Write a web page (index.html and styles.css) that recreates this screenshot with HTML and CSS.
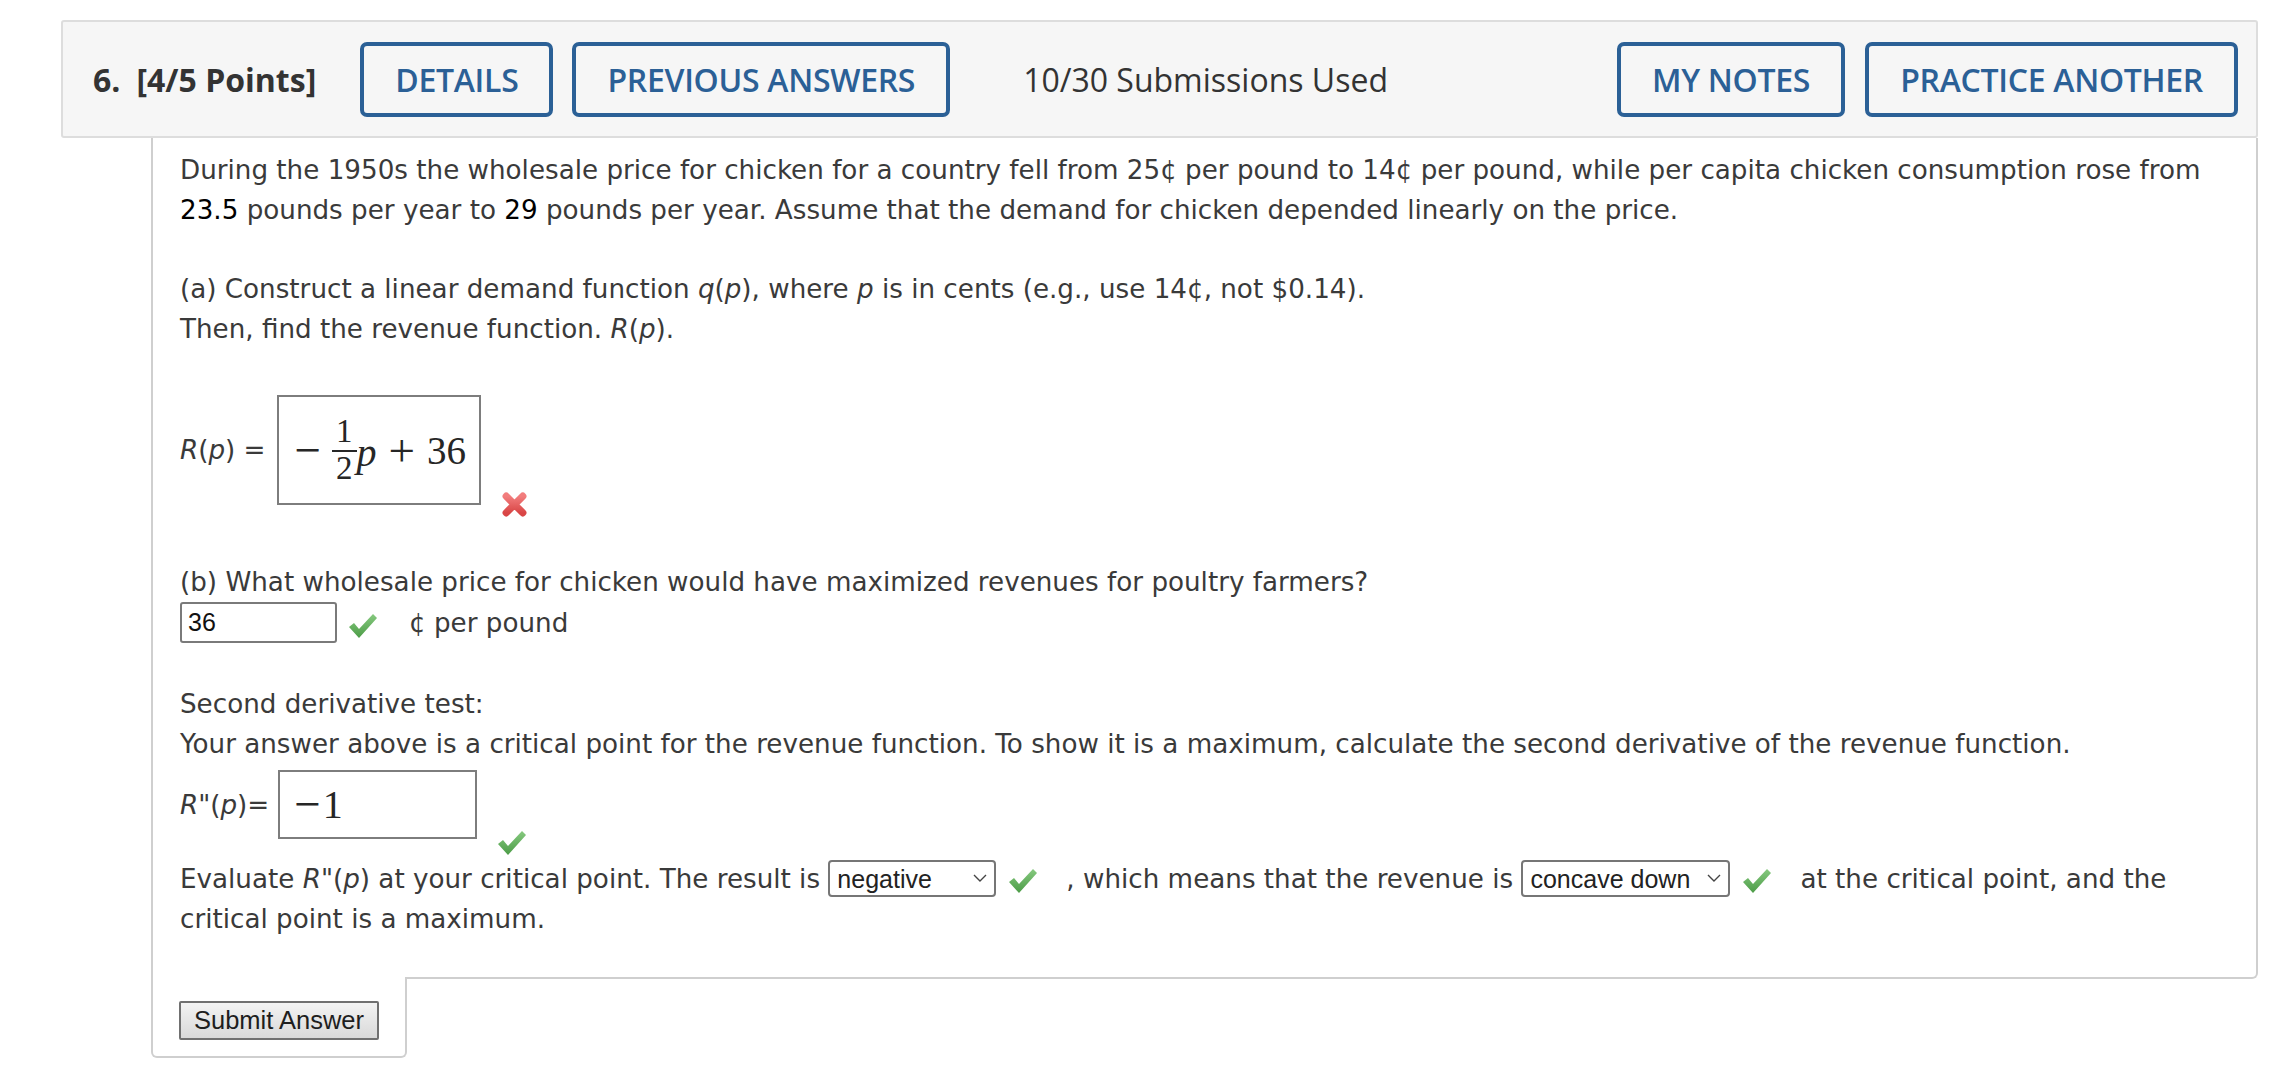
FILE: index.html
```html
<!DOCTYPE html>
<html lang="en">
<head>
<meta charset="utf-8">
<title>Question 6</title>
<link rel="stylesheet" href="styles.css">
</head>
<body>
<div class="question">
  <div class="q-header">
    <span class="q-title"><span class="q-num">6.</span>[4/5 Points]</span>
    <button class="hbtn hbtn-details">DETAILS</button>
    <button class="hbtn">PREVIOUS ANSWERS</button>
    <span class="q-subs">10/30 Submissions Used</span>
    <div class="q-right">
      <button class="hbtn">MY NOTES</button>
      <button class="hbtn">PRACTICE ANOTHER</button>
    </div>
  </div>
  <div class="q-body">
    <p class="para intro">During the 1950s the wholesale price for chicken for a country fell from 25¢ per pound to 14¢ per pound, while per capita chicken consumption rose from <span class="num">23.5</span> pounds per year to <span class="num">29</span> pounds per year. Assume that the demand for chicken depended linearly on the price.</p>
    <p class="para part-a">(a) Construct a linear demand function <i>q</i>(<i>p</i>), where <i>p</i> is in cents (e.g., use 14¢, not $0.14).<br>Then, find the revenue function. <i>R</i>(<i>p</i>).</p>
    <div class="ans-row row-rp">
      <span class="ans-label"><i>R</i>(<i>p</i>) =</span>
      <span class="mathbox mathbox-rp">
        <span class="mop">−</span>
        <span class="frac"><span class="fnum">1</span><span class="fden">2</span></span>
        <span class="mvar">p</span>
        <span class="mop mplus">+</span>
        <span class="mnum">36</span>
      </span>
      <svg class="icon icon-x" viewBox="0 0 28 26" width="29" height="27" aria-label="incorrect">
        <defs>
          <linearGradient id="xg" x1="0" y1="0" x2="0" y2="1">
            <stop offset="0" stop-color="#f27d7d"/>
            <stop offset="1" stop-color="#d94646"/>
          </linearGradient>
        </defs>
        <path d="M6 5 L22 21 M22 5 L6 21" stroke="url(#xg)" stroke-width="7" stroke-linecap="round" fill="none"/>
      </svg>
    </div>
    <p class="para part-b">(b) What wholesale price for chicken would have maximized revenues for poultry farmers?</p>
    <div class="ans-row row-b">
      <input class="txt-input" type="text" value="36" readonly>
      <svg class="icon icon-check check-b" viewBox="0 0 30 26" width="30" height="26" aria-label="correct">
        <defs>
          <linearGradient id="cg1" x1="0" y1="0" x2="0" y2="1">
            <stop offset="0" stop-color="#86c97f"/>
            <stop offset="1" stop-color="#4c9c47"/>
          </linearGradient>
        </defs>
        <path d="M1 14 L6 10 L11 16 L25 1 L29 5 L11 25 Z" fill="url(#cg1)"/>
      </svg>
      <span class="unit">¢ per pound</span>
    </div>
    <p class="para second">Second derivative test:<br>Your answer above is a critical point for the revenue function. To show it is a maximum, calculate the second derivative of the revenue function.</p>
    <div class="ans-row row-rpp">
      <span class="ans-label"><i>R</i>"(<i>p</i>)=</span>
      <span class="mathbox mathbox-rpp"><span class="mop">−</span><span class="mnum one">1</span></span>
      <svg class="icon icon-check check-rpp" viewBox="0 0 30 26" width="30" height="26" aria-label="correct">
        <path d="M1 14 L6 10 L11 16 L25 1 L29 5 L11 25 Z" fill="url(#cg1)"/>
      </svg>
    </div>
    <p class="para evaluate">Evaluate <i>R</i>"(<i>p</i>) at your critical point. The result is <span class="sel sel-neg"><select><option>negative</option></select><svg class="chev" viewBox="0 0 14 8" width="14" height="8"><path d="M1 1 L7 7 L13 1" fill="none" stroke="#444" stroke-width="1.4"/></svg></span><svg class="icon icon-check inl" viewBox="0 0 30 26" width="30" height="26" aria-label="correct"><path d="M1 14 L6 10 L11 16 L25 1 L29 5 L11 25 Z" fill="url(#cg1)"/></svg><span class="after-check">, which means that the revenue is</span> <span class="sel sel-cd"><select><option>concave down</option></select><svg class="chev" viewBox="0 0 14 8" width="14" height="8"><path d="M1 1 L7 7 L13 1" fill="none" stroke="#444" stroke-width="1.4"/></svg></span><svg class="icon icon-check inl" viewBox="0 0 30 26" width="30" height="26" aria-label="correct"><path d="M1 14 L6 10 L11 16 L25 1 L29 5 L11 25 Z" fill="url(#cg1)"/></svg><span class="after-check">at the critical point, and the critical point is a maximum.</span></p>
  </div>
  <div class="q-submit">
    <button class="submit-btn">Submit Answer</button>
  </div>
</div>
</body>
</html>
```
FILE: styles.css
```css
* { box-sizing: border-box; }

body {
  margin: 0;
  background: #ffffff;
  font-family: "DejaVu Sans", Verdana, sans-serif;
  color: #3a3a3a;
}

.question {
  margin: 20px 0 0 61px;
  width: 2197px;
}

/* header bar */
.q-header {
  height: 118px;
  background: #f6f6f6;
  border: 2px solid #dddddd;
  border-radius: 3px;
  display: flex;
  align-items: center;
  padding: 0 18px 0 30px;
  font-family: "Open Sans", "Noto Sans", sans-serif;
  font-size: 32px;
  color: #333333;
}

.q-title {
  font-weight: 700;
  margin-right: 44px;
  white-space: nowrap;
}

.q-num { margin-right: 16px; }

.hbtn {
  height: 75px;
  padding: 0 31px;
  border: 4px solid #2b6096;
  border-radius: 7px;
  background: transparent;
  color: #2b6096;
  font-family: "Open Sans", "Noto Sans", sans-serif;
  font-weight: 600;
  font-size: 32px;
  letter-spacing: -0.3px;
  white-space: nowrap;
}

.hbtn-details { margin-right: 19px; }

.q-subs {
  margin-left: 73px;
  white-space: nowrap;
}

.q-right {
  margin-left: auto;
  display: flex;
  gap: 20px;
}

/* body */
.q-body {
  border: 2px solid #cfcfcf;
  border-top: none;
  border-radius: 0 0 6px 0;
  margin-left: 90px;
  padding: 12px 30px 38px 27px;
  font-size: 26.2px;
  line-height: 40px;
}

.para { margin: 0; }

.num { color: #000000; }

i { font-style: italic; }

.intro { margin-bottom: 39px; }

.ans-row {
  display: flex;
  align-items: center;
}

.row-rp { margin-top: 46px; }

.ans-label { white-space: pre; margin-right: 11px; }

.row-rpp .ans-label { margin-right: 9px; }

.mathbox {
  display: inline-flex;
  align-items: center;
  border: 2px solid #7d7d7d;
  font-family: "Liberation Serif", "DejaVu Serif", serif;
  color: #262626;
  font-size: 38px;
  line-height: 1;
}

.mathbox-rp {
  width: 204px;
  height: 110px;
  padding-left: 16px;
}

.mathbox-rpp {
  width: 199px;
  height: 69px;
  padding-left: 14px;
}

.mop {
  font-size: 47px;
  line-height: 1;
}

.frac {
  display: inline-flex;
  flex-direction: column;
  align-items: center;
  margin-left: 11px;
  font-size: 33px;
  line-height: 0.95;
}

.fnum {
  padding: 0 4px 2px;
  border-bottom: 2px solid #262626;
}

.fden { padding-top: 1px; }

.mvar {
  font-style: italic;
  font-size: 40px;
  margin-top: 6px;
}

.mplus { margin: 0 12px; }

.mnum { font-size: 39px; }

.mnum.one {
  font-size: 40px;
  margin-left: 2px;
}

.icon { display: block; flex: none; }

.icon-x {
  align-self: flex-end;
  margin: 0 0 -13px 19px;
}

.part-b { margin-top: 57px; }

.row-b { height: 41px; }

.txt-input {
  width: 157px;
  height: 41px;
  border: 2px solid #7a7a7a;
  border-radius: 3px;
  padding: 0 6px;
  font-family: "Liberation Sans", Arial, sans-serif;
  font-size: 25px;
  color: #111111;
  background: #ffffff;
}

.check-b { margin: 6px 0 0 11px; }

.unit { margin-left: 31px; }

.second { margin-top: 41px; }

.row-rpp { margin-top: 6px; }

.check-rpp {
  align-self: flex-end;
  margin: 0 0 -17px 20px;
}

.evaluate { margin-top: 20px; }

.sel {
  position: relative;
  display: inline-block;
  vertical-align: middle;
  margin-top: -4px;
}

.sel select {
  appearance: none;
  -webkit-appearance: none;
  height: 37px;
  border: 2px solid #767676;
  border-radius: 4px;
  background: #ffffff;
  font-family: "Liberation Sans", Arial, sans-serif;
  font-size: 25px;
  color: #222222;
  padding: 0 28px 0 7px;
}

.sel-neg select { width: 168px; }
.sel-cd select { width: 209px; }

.chev {
  position: absolute;
  right: 9px;
  top: 15px;
}

.icon-check.inl {
  display: inline-block;
  vertical-align: middle;
  margin: 0 28px 0 12px;
}

/* submit tab */
.q-submit {
  width: 256px;
  margin: -2px 0 0 90px;
  height: 81px;
  background: #ffffff;
  border: 2px solid #cfcfcf;
  border-top: none;
  border-radius: 0 0 6px 6px;
  padding: 24px 0 0 26px;
  position: relative;
}

.submit-btn {
  width: 200px;
  height: 39px;
  border: 2px solid #707070;
  border-radius: 2px;
  background: linear-gradient(#f3f3f3, #d9d9d9);
  font-family: "Liberation Sans", Arial, sans-serif;
  font-size: 25.5px;
  color: #1e1e1e;
  padding: 0;
}
```
